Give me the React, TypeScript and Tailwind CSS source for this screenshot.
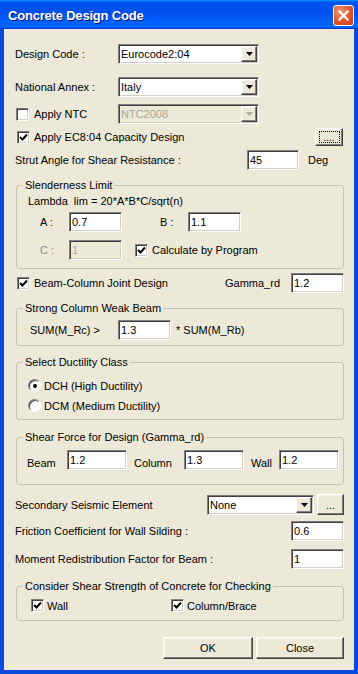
import React from "react"

const sunken =
  "border border-t-[#808080] border-l-[#808080] border-r-white border-b-white shadow-[inset_1px_1px_0_#404040,inset_-1px_-1px_0_#d4d0c8]"
const raised =
  "border border-t-white border-l-white border-r-[#404040] border-b-[#404040] shadow-[inset_-1px_-1px_0_#808080,inset_1px_1px_0_#f4f3ee] bg-[#ece9d8]"

function Field({ value, w, disabled }: { value: string; w: string; disabled?: boolean }) {
  return (
    <div
      className={`flex h-[20px] shrink-0 items-center pl-[2px] ${w} ${sunken} ${
        disabled ? "bg-[#ece9d8] text-[#aca899]" : "bg-white text-black"
      }`}
    >
      {value}
    </div>
  )
}

function Arrow({ disabled }: { disabled?: boolean }) {
  return (
    <div className={`mr-px flex h-[16px] w-[16px] items-center justify-center ${raised}`}>
      <svg width="7" height="4" viewBox="0 0 7 4">
        <polygon points="0,0 7,0 3.5,4" fill={disabled ? "#aca899" : "#000"} />
      </svg>
    </div>
  )
}

function Select({ value, w, disabled }: { value: string; w: string; disabled?: boolean }) {
  return (
    <div
      className={`flex h-[20px] shrink-0 items-center pl-[2px] ${w} ${sunken} ${
        disabled ? "bg-[#ece9d8] text-[#aca899]" : "bg-white text-black"
      }`}
    >
      <span className="flex-1">{value}</span>
      <Arrow disabled={disabled} />
    </div>
  )
}

function Check({ checked }: { checked?: boolean }) {
  return (
    <div className={`flex h-[13px] w-[13px] shrink-0 items-center justify-center bg-white ${sunken}`}>
      {checked && (
        <svg width="9" height="9" viewBox="0 0 9 9">
          <path d="M1 4 L3.5 6.5 L8 1.5" stroke="#000" strokeWidth="2" fill="none" />
        </svg>
      )}
    </div>
  )
}

function Radio({ checked }: { checked?: boolean }) {
  return (
    <div className="flex h-[13px] w-[13px] shrink-0 items-center justify-center rounded-full border border-t-[#808080] border-l-[#808080] border-r-white border-b-white bg-white shadow-[inset_1px_1px_0_#404040]">
      {checked && <div className="h-[4px] w-[4px] rounded-full bg-black" />}
    </div>
  )
}

function Group({ title, children, className }: { title: string; children: React.ReactNode; className: string }) {
  return (
    <fieldset className={`ml-px rounded-[3px] border border-[#c5c2b2] ${className}`}>
      <legend className="ml-[6px] px-[2px] leading-[14px]">{title}</legend>
      {children}
    </fieldset>
  )
}

export default function App() {
  return (
    <div className="flex h-[674px] w-[358px] flex-col font-['Liberation_Sans',Arial,sans-serif] text-[11px] leading-[14px] text-black">
      <div className="flex h-[29px] shrink-0 items-center justify-between bg-[linear-gradient(180deg,#0997ff,#0053ee_8%,#0050ee_40%,#06f_88%,#06f_93%,#005bff_95%,#003dd7_96%,#003dd7)] pl-[8px] pr-[4px]">
        <span className="pt-[2px] text-[13px] font-bold tracking-[-0.2px] text-white [text-shadow:1px_1px_0_#0a1883]">
          Concrete Design Code
        </span>
        <div className="mt-px flex h-[21px] w-[21px] items-center justify-center rounded-[3px] border border-white bg-[radial-gradient(circle_at_35%_30%,#f09a7a,#e2552e_55%,#c4401c)]">
          <svg width="11" height="11" viewBox="0 0 11 11">
            <path d="M1.5 1.5 L9.5 9.5 M9.5 1.5 L1.5 9.5" stroke="#fff" strokeWidth="2.2" strokeLinecap="square" />
          </svg>
        </div>
      </div>

      <div className="flex flex-1 flex-col border-x-4 border-b-4 border-[#0a49dd] bg-[#ece9d8] pl-[11px] pr-[10px]">
        <div className="mt-[15px] flex items-center">
          <span className="w-[103px]">Design Code :</span>
          <Select value="Eurocode2:04" w="w-[141px]" />
        </div>
        <div className="mt-[13px] flex items-center">
          <span className="w-[103px]">National Annex :</span>
          <Select value="Italy" w="w-[141px]" />
        </div>
        <div className="mt-[7px] flex items-center">
          <div className="flex w-[103px] items-center pl-px">
            <Check />
            <span className="ml-[5px]">Apply NTC</span>
          </div>
          <Select value="NTC2008" w="w-[141px]" disabled />
        </div>
        <div className="mt-[4px] flex h-[18px] items-center">
          <div className="flex flex-1 items-center pl-[2px]">
            <Check checked />
            <span className="ml-[4px]">Apply EC8:04 Capacity Design</span>
          </div>
          <div className={`mr-px flex h-[18px] w-[28px] items-center justify-center ${raised}`}>
            <span className="flex h-[12px] w-[21px] items-end justify-center border border-dotted border-black text-[10px] leading-[8px]">
              ....
            </span>
          </div>
        </div>
        <div className="mt-[4px] flex items-center">
          <span className="w-[232px]">Strut Angle for Shear Resistance :</span>
          <Field value="45" w="w-[52px]" />
          <span className="ml-[9px]">Deg</span>
        </div>

        <Group title="Slenderness Limit" className="mt-[8px] pb-[8px]">
          <div className="pl-[11px]">
            <div className="mt-[2px]">Lambda&nbsp; lim = 20*A*B*C/sqrt(n)</div>
            <div className="mt-[4px] flex items-center pl-[12px]">
              <span className="w-[29px]">A :</span>
              <Field value="0.7" w="w-[53px]" />
              <span className="ml-[38px] w-[28px]">B :</span>
              <Field value="1.1" w="w-[53px]" />
            </div>
            <div className="mt-[8px] flex items-center pl-[12px]">
              <span className="w-[29px] text-[#8c8c8c]">C :</span>
              <Field value="1" w="w-[53px]" disabled />
              <div className="ml-[13px]">
                <Check checked />
              </div>
              <span className="ml-[4px]">Calculate by Program</span>
            </div>
          </div>
        </Group>

        <div className="mt-[4px] flex items-center">
          <div className="flex flex-1 items-center pl-[2px]">
            <Check checked />
            <span className="ml-[4px]">Beam-Column Joint Design</span>
          </div>
          <span className="w-[66px]">Gamma_rd</span>
          <Field value="1.2" w="w-[53px]" />
        </div>

        <Group title="Strong Column Weak Beam" className="mt-[8px] pb-[5px]">
          <div className="mt-[5px] flex items-center pl-[13px]">
            <span className="w-[88px]">SUM(M_Rc) &gt;</span>
            <Field value="1.3" w="w-[53px]" />
            <span className="ml-[5px]">* SUM(M_Rb)</span>
          </div>
        </Group>

        <Group title="Select Ductility Class" className="mt-[9px] pb-[7px]">
          <div className="pl-[11px]">
            <div className="mt-[10px] flex h-[13px] items-center">
              <Radio checked />
              <span className="ml-[3px]">DCH (High Ductility)</span>
            </div>
            <div className="mt-[7px] flex h-[13px] items-center">
              <Radio />
              <span className="ml-[3px]">DCM (Medium Ductility)</span>
            </div>
          </div>
        </Group>

        <Group title="Shear Force for Design (Gamma_rd)" className="mt-[10px] pb-[14px]">
          <div className="mt-[6px] flex items-start pl-[10px]">
            <span className="w-[40px] pt-[6px]">Beam</span>
            <Field value="1.2" w="w-[60px]" />
            <span className="ml-[7px] w-[50px] pt-[6px]">Column</span>
            <Field value="1.3" w="w-[60px]" />
            <span className="ml-[7px] w-[28px] pt-[6px]">Wall</span>
            <Field value="1.2" w="w-[60px]" />
          </div>
        </Group>

        <div className="mt-[9px] flex items-center">
          <span className="flex-1">Secondary Seismic Element</span>
          <Select value="None" w="w-[107px]" />
          <div className={`ml-[3px] flex h-[21px] w-[27px] items-center justify-center ${raised}`}>...</div>
        </div>
        <div className="mt-[6px] flex items-center">
          <span className="flex-1">Friction Coefficient for Wall Silding :</span>
          <Field value="0.6" w="w-[53px]" />
        </div>
        <div className="mt-[8px] flex items-center">
          <span className="flex-1">Moment Redistribution Factor for Beam :</span>
          <Field value="1" w="w-[53px]" />
        </div>

        <Group title="Consider Shear Strength of Concrete for Checking" className="mt-[10px] pb-[8px]">
          <div className="mt-[6px] flex h-[13px] items-center pl-[14px]">
            <div className="flex w-[140px] items-center">
              <Check checked />
              <span className="ml-[3px]">Wall</span>
            </div>
            <Check checked />
            <span className="ml-[3px]">Column/Brace</span>
          </div>
        </Group>

        <div className="mt-[16px] flex justify-end">
          <div className={`flex h-[22px] w-[90px] items-center justify-center ${raised}`}>OK</div>
          <div className={`ml-[3px] flex h-[22px] w-[88px] items-center justify-center ${raised}`}>Close</div>
        </div>
      </div>
    </div>
  )
}
